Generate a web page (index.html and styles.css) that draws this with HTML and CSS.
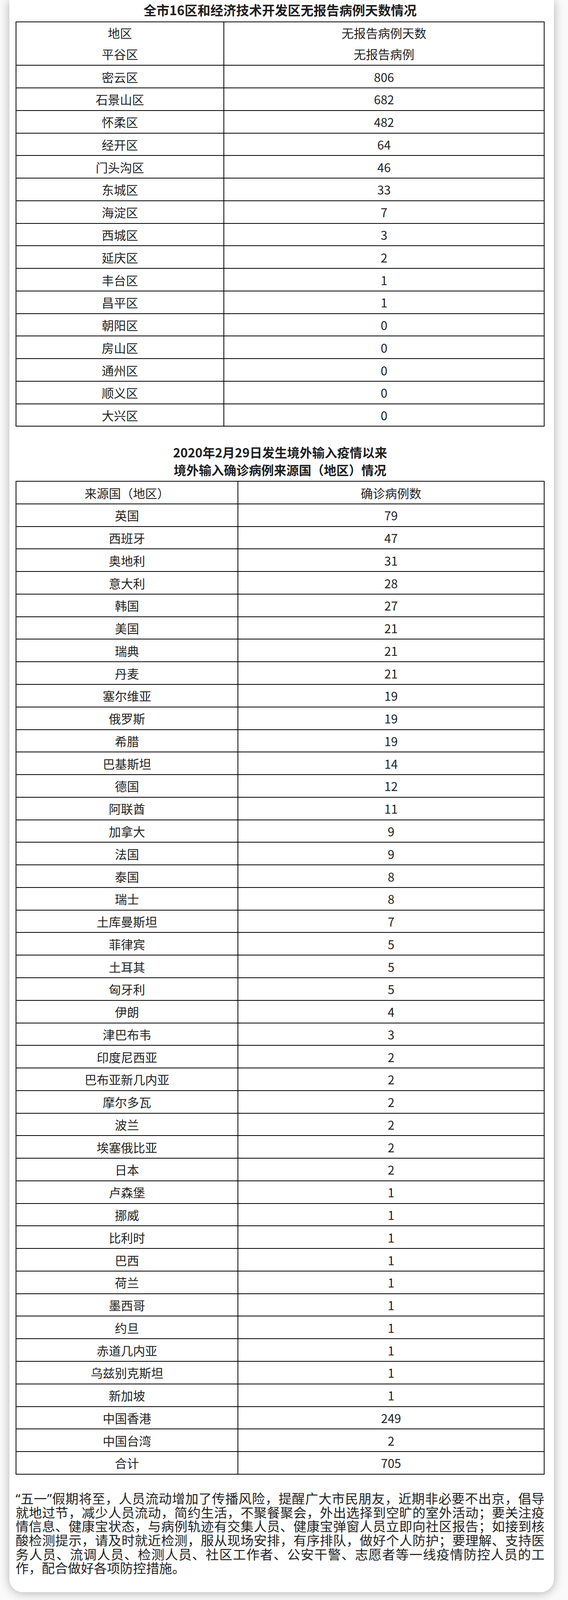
FILE: index.html
```html
<!DOCTYPE html>
<html lang="zh-CN">
<head>
<meta charset="utf-8">
<title>全市16区和经济技术开发区无报告病例天数情况</title>
<link rel="stylesheet" href="styles.css">
</head>
<body>
<div class="page">
  <article class="card">
    <h2 class="title title-first">全市16区和经济技术开发区无报告病例天数情况</h2>
    <table class="data data-districts">
      <colgroup><col class="col-a"><col></colgroup>
      <tr class="head">
        <td><p class="hline">地区</p><p class="hline">平谷区</p></td>
        <td><p class="hline">无报告病例天数</p><p class="hline">无报告病例</p></td>
      </tr>
      <tr><td>密云区</td><td>806</td></tr>
      <tr><td>石景山区</td><td>682</td></tr>
      <tr><td>怀柔区</td><td>482</td></tr>
      <tr><td>经开区</td><td>64</td></tr>
      <tr><td>门头沟区</td><td>46</td></tr>
      <tr><td>东城区</td><td>33</td></tr>
      <tr><td>海淀区</td><td>7</td></tr>
      <tr><td>西城区</td><td>3</td></tr>
      <tr><td>延庆区</td><td>2</td></tr>
      <tr><td>丰台区</td><td>1</td></tr>
      <tr><td>昌平区</td><td>1</td></tr>
      <tr><td>朝阳区</td><td>0</td></tr>
      <tr><td>房山区</td><td>0</td></tr>
      <tr><td>通州区</td><td>0</td></tr>
      <tr><td>顺义区</td><td>0</td></tr>
      <tr><td>大兴区</td><td>0</td></tr>
    </table>

    <h2 class="title title-second"><span class="tline">2020年2月29日发生境外输入疫情以来</span><span class="tline">境外输入确诊病例来源国（地区）情况</span></h2>
    <table class="data data-countries">
      <colgroup><col class="col-b"><col></colgroup>
      <tr><td>来源国（地区）</td><td>确诊病例数</td></tr>
      <tr><td>英国</td><td>79</td></tr>
      <tr><td>西班牙</td><td>47</td></tr>
      <tr><td>奥地利</td><td>31</td></tr>
      <tr><td>意大利</td><td>28</td></tr>
      <tr><td>韩国</td><td>27</td></tr>
      <tr><td>美国</td><td>21</td></tr>
      <tr><td>瑞典</td><td>21</td></tr>
      <tr><td>丹麦</td><td>21</td></tr>
      <tr><td>塞尔维亚</td><td>19</td></tr>
      <tr><td>俄罗斯</td><td>19</td></tr>
      <tr><td>希腊</td><td>19</td></tr>
      <tr><td>巴基斯坦</td><td>14</td></tr>
      <tr><td>德国</td><td>12</td></tr>
      <tr><td>阿联酋</td><td>11</td></tr>
      <tr><td>加拿大</td><td>9</td></tr>
      <tr><td>法国</td><td>9</td></tr>
      <tr><td>泰国</td><td>8</td></tr>
      <tr><td>瑞士</td><td>8</td></tr>
      <tr><td>土库曼斯坦</td><td>7</td></tr>
      <tr><td>菲律宾</td><td>5</td></tr>
      <tr><td>土耳其</td><td>5</td></tr>
      <tr><td>匈牙利</td><td>5</td></tr>
      <tr><td>伊朗</td><td>4</td></tr>
      <tr><td>津巴布韦</td><td>3</td></tr>
      <tr><td>印度尼西亚</td><td>2</td></tr>
      <tr><td>巴布亚新几内亚</td><td>2</td></tr>
      <tr><td>摩尔多瓦</td><td>2</td></tr>
      <tr><td>波兰</td><td>2</td></tr>
      <tr><td>埃塞俄比亚</td><td>2</td></tr>
      <tr><td>日本</td><td>2</td></tr>
      <tr><td>卢森堡</td><td>1</td></tr>
      <tr><td>挪威</td><td>1</td></tr>
      <tr><td>比利时</td><td>1</td></tr>
      <tr><td>巴西</td><td>1</td></tr>
      <tr><td>荷兰</td><td>1</td></tr>
      <tr><td>墨西哥</td><td>1</td></tr>
      <tr><td>约旦</td><td>1</td></tr>
      <tr><td>赤道几内亚</td><td>1</td></tr>
      <tr><td>乌兹别克斯坦</td><td>1</td></tr>
      <tr><td>新加坡</td><td>1</td></tr>
      <tr><td>中国香港</td><td>249</td></tr>
      <tr><td>中国台湾</td><td>2</td></tr>
      <tr><td>合计</td><td>705</td></tr>
    </table>

    <p class="notice">“五一”假期将至，人员流动增加了传播风险，提醒广大市民朋友，近期非必要不出京，倡导就地过节，减少人员流动，简约生活，不聚餐聚会，外出选择到空旷的室外活动；要关注疫情信息、健康宝状态，与病例轨迹有交集人员、健康宝弹窗人员立即向社区报告；如接到核酸检测提示，请及时就近检测，服从现场安排，有序排队，做好个人防护；要理解、支持医务人员、流调人员、检测人员、社区工作者、公安干警、志愿者等一线疫情防控人员的工作，配合做好各项防控措施。</p>
  </article>
</div>
</body>
</html>
```

FILE: styles.css
```css
/* The layout is drawn on a 1454 x 6381 window: one vertical
   design pixel is 1/6381 of the window height. */
:root {
  --u: calc(100vh / 6381);
}

html, body {
  margin: 0;
  padding: 0;
}

body {
  background: #fafafa;
  font-family: "Noto Sans CJK SC", "Noto Sans", sans-serif;
  color: #222;
}

.page {
  padding: 0 36px calc(var(--u) * 35) 24px;
}

.card {
  background: #fff;
  border-radius: 0 0 34px 34px;
  box-shadow: 0 2px 26px rgba(0, 0, 0, 0.3);
  padding: 0 24px calc(var(--u) * 68) 16px;
}

.title {
  margin: 0;
  text-align: center;
  font-weight: 700;
  color: #1e1e1e;
}

.title-first {
  padding-top: calc(var(--u) * 17);
  margin-bottom: calc(var(--u) * 22);
  font-size: 33px;
  line-height: calc(var(--u) * 46);
}

.title-second {
  margin-top: calc(var(--u) * 66);
  margin-bottom: calc(var(--u) * 10);
  font-size: 32px;
  line-height: calc(var(--u) * 70);
}

.tline {
  display: block;
}

.data {
  width: 100%;
  border-collapse: collapse;
  table-layout: fixed;
}

.col-a {
  width: 532px;
}

.col-b {
  width: 568px;
}

.data td {
  border: 2px solid #000;
  padding: 0;
  height: calc(var(--u) * 90 - 2px);
  text-align: center;
  vertical-align: middle;
  font-size: 31px;
  line-height: 1;
  color: #222;
}

.hline {
  margin: 0;
  line-height: calc(var(--u) * 87 - 1px);
}

.notice {
  margin: calc(var(--u) * 69) 0 0;
  font-family: "Noto Sans", "Noto Sans CJK SC", sans-serif;
  font-size: 33.4px;
  line-height: calc(var(--u) * 55.5);
  text-align: justify;
  color: #222;
}
```
